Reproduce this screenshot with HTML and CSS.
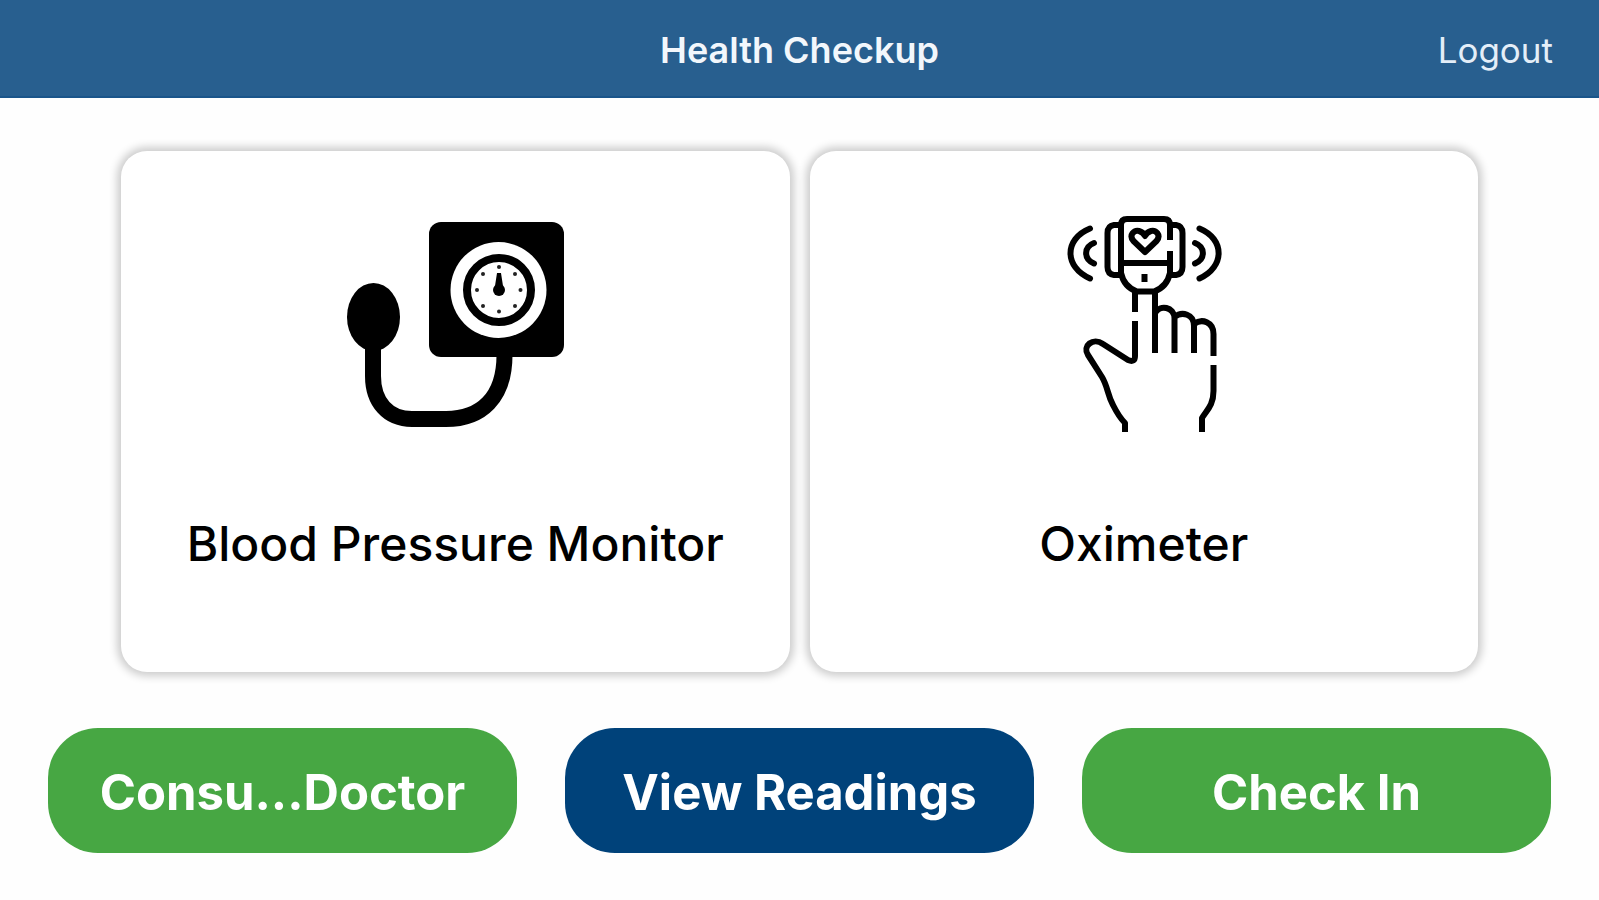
FILE: index.html
```html
<!DOCTYPE html>
<html lang="en">
<head>
<meta charset="utf-8">
<meta name="viewport" content="width=device-width, initial-scale=1">
<title>Health Checkup</title>
<link rel="stylesheet" href="styles.css">
</head>
<body>
<header class="topbar">
  <h1 class="topbar-title">Health Checkup</h1>
  <button class="logout" type="button">Logout</button>
</header>
<main class="content">
  <div class="devices">
    <button class="card" type="button">
      <svg class="card-icon" viewBox="335 200 240 240" aria-hidden="true">
        <rect x="429" y="222" width="135" height="135" rx="12"/>
        <circle cx="498.500" cy="290" r="48" fill="#fff"/>
        <circle cx="499" cy="290" r="32" fill="none" stroke="#000" stroke-width="8"/>
        <g fill="#222">
          <circle cx="499" cy="267" r="2"/><circle cx="515" cy="274" r="2"/>
          <circle cx="520.5" cy="290" r="2"/><circle cx="515" cy="306" r="2"/>
          <circle cx="499" cy="311.500" r="2"/><circle cx="483" cy="306" r="2"/>
          <circle cx="477" cy="290" r="2"/><circle cx="483" cy="274" r="2"/>
        </g>
        <path d="M497 273h4l2 13h-8z"/>
        <circle cx="499" cy="290" r="6"/>
        <ellipse cx="373.500" cy="317" rx="26.500" ry="34"/>
        <path d="M373 345V376C373 402 388 419 412 419H446C481 419 504.500 398 504.500 355" fill="none" stroke="#000" stroke-width="16"/>
      </svg>
      <span class="card-label">Blood Pressure Monitor</span>
    </button>
    <button class="card" type="button">
      <svg class="card-icon line" viewBox="1024 200 240 240" aria-hidden="true">
        <path d="M1170 240V225Q1170 219 1164 219H1127Q1121 219 1121 225V273Q1124 287 1137 291.500H1154Q1167 287 1170 273V251"/>
        <path d="M1121 263H1170"/>
        <path d="M1121 225H1114Q1107.500 226 1107.500 233V267Q1107.500 274 1114 275H1121M1170 225H1176Q1182.500 226 1182.500 233V267Q1182.500 274 1176 275H1170"/>
        <path d="M1145 252L1133.500 241C1128.500 235 1134 230 1139 231Q1143 232 1145 236Q1147 232 1151 231C1156 230 1161.500 235 1156.500 241Z"/>
        <path d="M1144.500 274V282"/>
        <path stroke-linecap="round" d="M1090 228.500C1064 239 1064 267 1090 278.500M1094 243C1083.500 247 1083.500 259 1094 263.500M1199.500 228.500C1225 239 1225 267 1199.500 278.500M1195 243C1205.500 247 1205.500 259 1195 263.500"/>
        <path d="M1135 292V312M1135 321V356Q1135 363 1128 360L1103 344C1093 337 1082 346 1088 355L1102 377C1108 387 1107 394 1113 405Q1119 417 1125 423V432"/>
        <path d="M1155 292V353M1155 313C1160 304 1174 307 1174.500 318V353M1174.500 317C1182 311 1194 314 1194 326V353M1194 324C1202 318 1213.500 322 1213.500 334V356M1213.500 365V391C1213.500 405 1207 410 1202 418V432"/>
      </svg>
      <span class="card-label">Oximeter</span>
    </button>
  </div>
  <nav class="actions" aria-label="Actions">
    <button class="action" type="button">Consu...Doctor</button>
    <button class="action action-primary" type="button">View Readings</button>
    <button class="action" type="button">Check In</button>
  </nav>
</main>
</body>
</html>
```

FILE: styles.css
```css
* {
  box-sizing: border-box;
}

body {
  margin: 0;
  background: #fefefe;
  color: #000;
  font-family: Inter, "Liberation Sans", sans-serif;
}

button {
  border: 0;
  font-family: inherit;
  cursor: pointer;
}

.topbar {
  display: grid;
  grid-template-columns: 1fr auto 1fr;
  align-items: center;
  padding: 29px 46px 25px;
  border-bottom: 2px solid #1a558a;
  background: #285f8f;
  color: #f2f7fc;
  line-height: 42px;
}

.topbar-title {
  grid-column: 2;
  margin: 0;
  font-size: 36px;
  font-weight: 600;
}

.logout {
  justify-self: end;
  padding: 0;
  background: none;
  color: #e4eef8;
  font-size: 35px;
  line-height: 42px;
}

.content {
  padding: 53px 48px 48px;
}

.devices {
  display: grid;
  grid-template-columns: 1fr 1fr;
  gap: 20px;
  padding: 0 73px;
}

.card {
  display: flex;
  flex-direction: column;
  align-items: center;
  gap: 74px;
  padding: 49px 24px 98px;
  border-radius: 26px;
  background: #fff;
  box-shadow: 0 0 8px 4px rgba(0, 0, 0, 0.2);
  color: #000;
}

.card-icon {
  width: 240px;
  height: 240px;
}

.line {
  fill: none;
  stroke: #000;
  stroke-width: 6;
  stroke-linejoin: round;
}

.card-label {
  font-size: 48px;
  font-weight: 500;
  line-height: 60px;
}

.actions {
  display: grid;
  grid-template-columns: repeat(3, 1fr);
  gap: 48px;
  margin-top: 56px;
}

.action {
  padding: 34px 24px 30px;
  border-radius: 50px;
  background: #47a743;
  color: #fff;
  font-size: 49px;
  font-weight: 700;
  line-height: 61px;
  white-space: nowrap;
}

.action-primary {
  background: #00427a;
}
```
